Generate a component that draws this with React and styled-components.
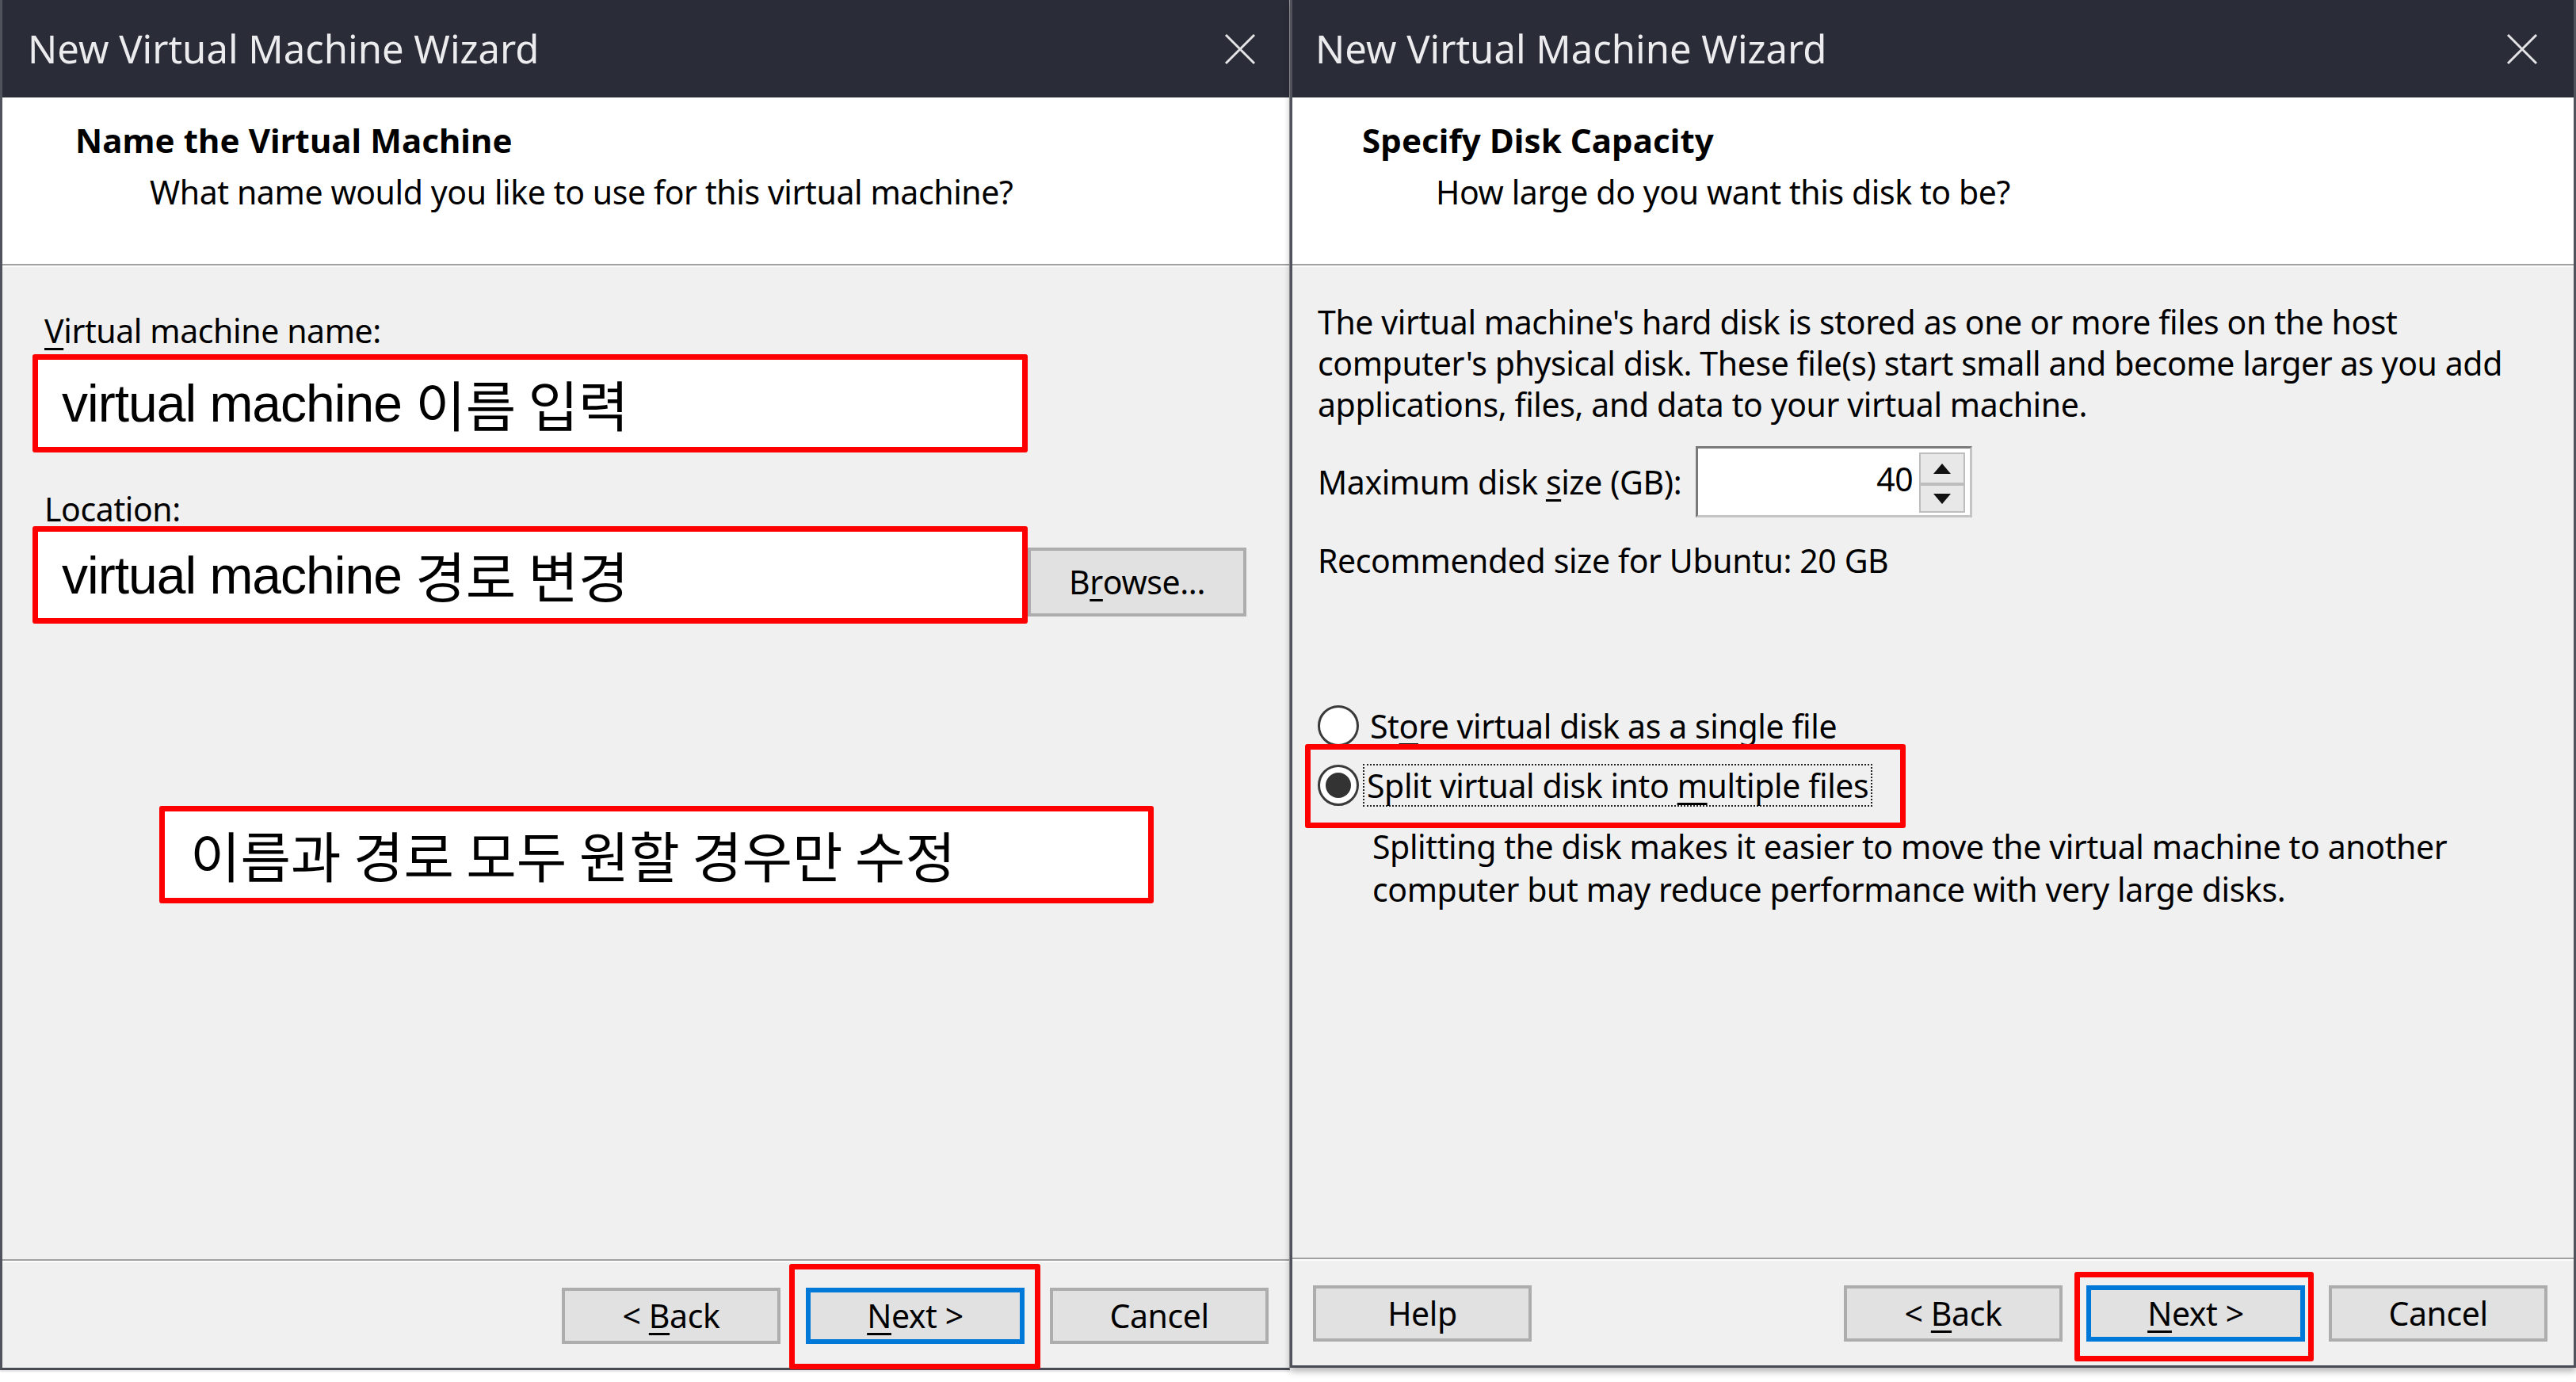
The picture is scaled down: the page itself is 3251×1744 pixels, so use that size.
import React from 'react';
import styled, { createGlobalStyle } from 'styled-components';

const UI_FONT = `"Noto Sans", "Open Sans", sans-serif`;
const NOTE_FONT = `"Noto Sans CJK KR", "Liberation Sans", sans-serif`;

const GlobalStyle = createGlobalStyle`
  html, body {
    margin: 0;
    padding: 0;
    background: #fff;
  }
  body {
    width: 3251px;
    height: 1744px;
    overflow: hidden;
    font-family: ${UI_FONT};
    color: #000;
  }
  * {
    box-sizing: border-box;
  }
`;

const Page = styled.div`
  display: flex;
  align-items: flex-start;
  width: 3251px;
  height: 1744px;
  background: #fff;
`;

const Window = styled.div`
  position: relative;
  display: flex;
  flex-direction: column;
  flex-shrink: 0;
  width: ${p => p.$width}px;
  height: ${p => p.$height}px;
  background: #f0f0f0;
  border-left: 3px solid #50525c;
  border-right: ${p => (p.$front ? '3px solid #50525c' : '1px solid #9a9a9a')};
  border-bottom: 3px solid #474953;
  box-shadow: ${p => (p.$front ? '0 5px 8px rgba(0, 0, 0, 0.28)' : '0 2px 2px rgba(0, 0, 0, 0.12)')};
`;

const TitleBar = styled.div`
  display: flex;
  align-items: center;
  justify-content: space-between;
  flex-shrink: 0;
  height: 123px;
  padding: 0 ${p => p.$closeGap}px 0 ${p => p.$textGap}px;
  background: #2a2c38;
  color: #ececee;
  font-size: 49px;
  line-height: 1;
`;

const CloseIcon = () => (
  <svg width="40" height="40" viewBox="0 0 40 40">
    <path d="M2 2 L38 38 M38 2 L2 38" stroke="#e4e4e6" strokeWidth="3" fill="none" />
  </svg>
);

const Header = styled.div`
  flex-shrink: 0;
  height: 210px;
  padding-top: 28px;
  background: #fff;
  font-size: 41px;
  letter-spacing: -0.4px;
  line-height: 52px;
`;

const HeaderTitle = styled.div`
  margin-left: ${p => p.$inset}px;
  font-size: 42px;
  font-weight: 700;
  letter-spacing: 0.1px;
`;

const HeaderSubtitle = styled.div`
  margin-top: 13px;
  margin-left: ${p => p.$inset}px;
`;

const Separator = styled.div`
  flex-shrink: 0;
  height: 4px;
  border-top: 2px solid #a0a0a0;
  border-bottom: 2px solid #fcfcfc;
`;

const Body = styled.div`
  flex: 1;
  display: flex;
  flex-direction: column;
  align-items: flex-start;
  padding: ${p => p.$top}px 0 0 ${p => p.$left}px;
  font-size: 41px;
  letter-spacing: -0.4px;
  line-height: 52px;
`;

const FieldLabel = styled.div`
  margin: ${p => p.$top}px 0 ${p => p.$bottom}px 15px;
`;

const Key = styled.span`
  text-decoration: underline;
  text-decoration-thickness: 3px;
  text-underline-offset: 6px;
`;

const FieldRow = styled.div`
  display: flex;
  align-items: flex-start;
`;

const NoteBox = styled.div`
  display: flex;
  align-items: center;
  width: ${p => p.$width}px;
  height: ${p => p.$height}px;
  margin: ${p => p.$top || 0}px 0 0 ${p => p.$left || 0}px;
  padding-left: ${p => p.$pad}px;
  background: #fff;
  border: 7px solid #ff0000;
  border-radius: 3px;
  font-family: ${NOTE_FONT};
  font-size: 69px;
  letter-spacing: 0;
  line-height: 1;
  white-space: pre;
`;

const NoteLatin = styled.span`
  font-family: "Liberation Sans", sans-serif;
  font-size: 66px;
  letter-spacing: -1px;
`;

const Button = styled.div`
  position: relative;
  display: flex;
  align-items: center;
  justify-content: center;
  flex-shrink: 0;
  width: 276px;
  height: ${p => p.$height || 71}px;
  margin-top: ${p => p.$top || 0}px;
  background: #e1e1e1;
  border: ${p => (p.$default ? '6px solid #0078d7' : '4px solid #adadad')};
  font-size: 41px;
  letter-spacing: -0.4px;
  line-height: 1;
  white-space: pre;
`;

const Highlight = styled.span`
  position: absolute;
  top: ${p => p.$t}px;
  right: ${p => p.$r}px;
  bottom: ${p => p.$b}px;
  left: ${p => p.$l}px;
  border: 7px solid #ff0000;
  border-radius: 3px;
  pointer-events: none;
  z-index: 2;
`;

const Footer = styled.div`
  display: flex;
  align-items: flex-start;
  flex-shrink: 0;
  height: ${p => p.$height}px;
  padding: ${p => p.$top}px ${p => p.$right}px 0 ${p => p.$left}px;
  gap: ${p => p.$gap}px;
`;

const Spacer = styled.div`
  flex: 1;
`;

const Paragraph = styled.p`
  margin: 0;
  margin-left: ${p => p.$indent || 0}px;
  margin-top: ${p => p.$top || 0}px;
  line-height: ${p => p.$lh || 52}px;
  white-space: nowrap;
`;

const SizeRow = styled.div`
  display: flex;
  align-items: center;
  gap: 18px;
  margin-top: 27px;
`;

const SpinBox = styled.div`
  display: flex;
  align-items: flex-start;
  width: 349px;
  height: 90px;
  background: #fff;
  border: 3px solid #c4c4c4;
  border-top-color: #7a7a7a;
  border-left-color: #7a7a7a;
`;

const SpinValue = styled.div`
  flex: 1;
  align-self: center;
  padding-right: 8px;
  text-align: right;
  line-height: 1;
  margin-top: -8px;
`;

const SpinButtons = styled.div`
  display: flex;
  flex-direction: column;
  width: 58px;
  margin: 5px 6px 0 0;
`;

const SpinButton = styled.div`
  display: flex;
  align-items: center;
  justify-content: center;
  height: ${p => p.$height}px;
  background: #e8e8e8;
  border: 2px solid #bdbdbd;
`;

const Arrow = ({ up }) => (
  <svg width="22" height="13" viewBox="0 0 22 13">
    <path d={up ? 'M11 0 L22 13 L0 13 Z' : 'M0 0 L22 0 L11 13 Z'} fill="#111" />
  </svg>
);

const RadioRow = styled.div`
  position: relative;
  display: inline-flex;
  align-items: center;
  height: 52px;
  gap: ${p => p.$gap}px;
  margin-top: ${p => p.$top}px;
`;

const RadioCircle = styled.span`
  display: flex;
  align-items: center;
  justify-content: center;
  width: 52px;
  height: 52px;
  border-radius: 50%;
  background: #fff;
  border: 3px solid #3a3a3a;

  &::after {
    content: '';
    display: ${p => (p.$checked ? 'block' : 'none')};
    width: 32px;
    height: 32px;
    border-radius: 50%;
    background: #333;
  }
`;

const RadioLabel = styled.span`
  display: inline-block;
  height: 54px;
  padding: 0 3px;
  line-height: 50px;
  white-space: pre;
  border: 2px dotted ${p => (p.$focused ? '#222' : 'transparent')};
`;

const App = () => (
  <>
    <GlobalStyle />
    <Page>
      <Window $width={1628} $height={1729}>
        <TitleBar $textGap={32} $closeGap={42}>
          <span>New Virtual Machine Wizard</span>
          <CloseIcon />
        </TitleBar>
        <Header>
          <HeaderTitle $inset={92}>Name the Virtual Machine</HeaderTitle>
          <HeaderSubtitle $inset={186}>What name would you like to use for this virtual machine?</HeaderSubtitle>
        </Header>
        <Separator />
        <Body $top={54} $left={38}>
          <FieldLabel $top={0} $bottom={4}>
            <Key>V</Key>irtual machine name:
          </FieldLabel>
          <NoteBox $width={1256} $height={124} $pad={30}>
            <NoteLatin>virtual machine </NoteLatin>이름 입력
          </NoteBox>
          <FieldLabel $top={45} $bottom={-4}>
            <Key>L</Key>ocation:
          </FieldLabel>
          <FieldRow>
            <NoteBox $width={1256} $height={123} $pad={30}>
              <NoteLatin>virtual machine </NoteLatin>경로 변경
            </NoteBox>
            <Button $height={87} $top={27}>
              B<Key>r</Key>owse...
            </Button>
          </FieldRow>
          <NoteBox $width={1255} $height={123} $pad={32} $top={230} $left={160}>
            이름과 경로 모두 원할 경우만 수정
          </NoteBox>
        </Body>
        <Separator />
        <Footer $height={133} $top={32} $right={26} $left={0} $gap={32}>
          <Spacer />
          <Button>
            {'< '}<Key>B</Key>ack
          </Button>
          <Button $default>
            <Key>N</Key>{'ext >'}
            <Highlight $t={-36} $r={-26} $b={-38} $l={-27} />
          </Button>
          <Button>Cancel</Button>
        </Footer>
      </Window>

      <Window $width={1623} $height={1726} $front>
        <TitleBar $textGap={29} $closeGap={45}>
          <span>New Virtual Machine Wizard</span>
          <CloseIcon />
        </TitleBar>
        <Header>
          <HeaderTitle $inset={88}>Specify Disk Capacity</HeaderTitle>
          <HeaderSubtitle $inset={181}>How large do you want this disk to be?</HeaderSubtitle>
        </Header>
        <Separator />
        <Body $top={43} $left={32}>
          <Paragraph>
            The virtual machine's hard disk is stored as one or more files on the host
            <br />
            computer's physical disk. These file(s) start small and become larger as you add
            <br />
            applications, files, and data to your virtual machine.
          </Paragraph>
          <SizeRow>
            <span>
              Maximum disk <Key>s</Key>ize (GB):
            </span>
            <SpinBox>
              <SpinValue>40</SpinValue>
              <SpinButtons>
                <SpinButton $height={40}>
                  <Arrow up />
                </SpinButton>
                <SpinButton $height={36}>
                  <Arrow />
                </SpinButton>
              </SpinButtons>
            </SpinBox>
          </SizeRow>
          <Paragraph $top={28}>Recommended size for Ubuntu: 20 GB</Paragraph>
          <RadioRow $top={157} $gap={9}>
            <RadioCircle />
            <RadioLabel>
              St<Key>o</Key>re virtual disk as a single file
            </RadioLabel>
          </RadioRow>
          <RadioRow $top={23} $gap={5}>
            <RadioCircle $checked />
            <RadioLabel $focused>
              {'Split virtual disk into '}<Key>m</Key>ultiple files
            </RadioLabel>
            <Highlight $t={-26} $r={-42} $b={-28} $l={-16} />
          </RadioRow>
          <Paragraph $indent={69} $top={24} $lh={54}>
            Splitting the disk makes it easier to move the virtual machine to another
            <br />
            computer but may reduce performance with very large disks.
          </Paragraph>
        </Body>
        <Separator />
        <Footer $height={132} $top={31} $right={33} $left={26} $gap={30}>
          <Button>Help</Button>
          <Spacer />
          <Button>
            {'< '}<Key>B</Key>ack
          </Button>
          <Button $default>
            <Key>N</Key>{'ext >'}
            <Highlight $t={-23} $r={-17} $b={-31} $l={-21} />
          </Button>
          <Button>Cancel</Button>
        </Footer>
      </Window>
    </Page>
  </>
);

export default App;
